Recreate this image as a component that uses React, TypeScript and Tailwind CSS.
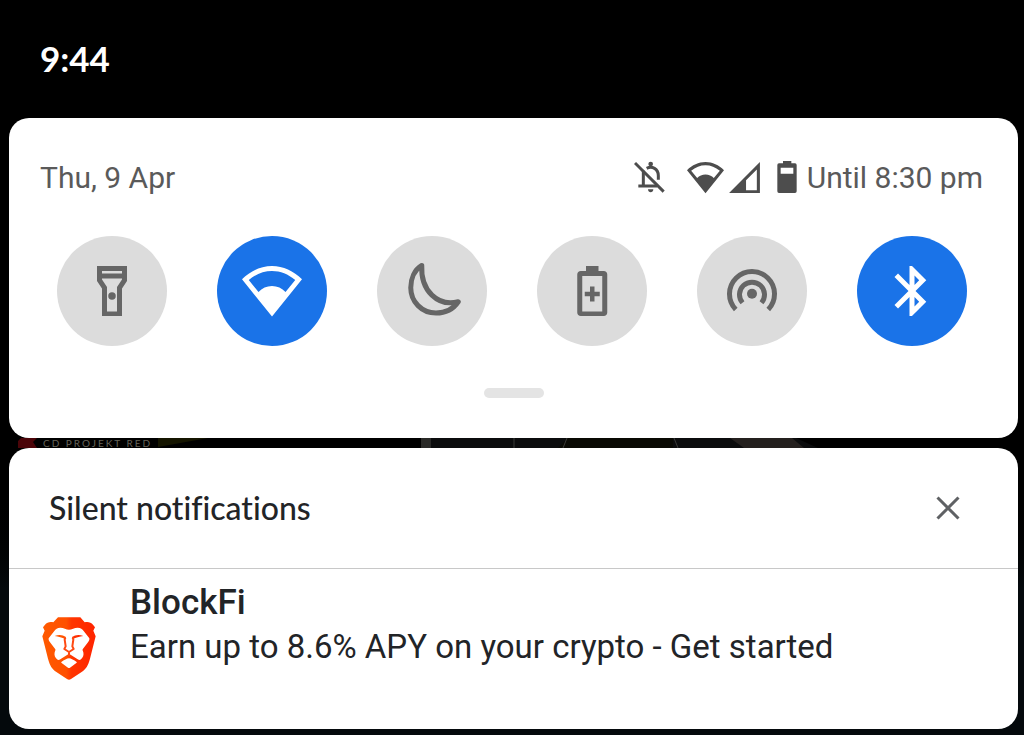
import type { ReactNode } from "react";

type Tile = {
  label: string;
  active: boolean;
  icon: ReactNode;
};

const WIFI_PATH =
  "M12 22.2 0 7.3C3.4 4 7.5 2 12 2s8.6 2 12 5.3L12 22.2zM2.7 7.6l3.9 4.8C8 10.8 9.9 10 12 10s4 .8 5.4 2.4l3.9-4.8C18.5 5.3 15.4 4 12 4S5.5 5.3 2.7 7.6z";

const TILES: Tile[] = [
  {
    label: "Torch",
    active: false,
    icon: (
      <>
        <path
          fillRule="evenodd"
          d="M6 2h12v6l-2 3v11H8V11L6 8V2zm2 2v1h8V4H8zm0 3v.4l2 3V20.2h4V10.4l2-3V7H8z"
        />
        <circle cx="12" cy="14" r="1.5" />
      </>
    ),
  },
  { label: "Wi-Fi", active: true, icon: <path fillRule="evenodd" d={WIFI_PATH} /> },
  {
    label: "Do not disturb",
    active: false,
    icon: (
      <path
        fill="none"
        stroke="currentColor"
        strokeWidth="2"
        strokeLinejoin="round"
        d="M7.9 1.8C5 3.5 3.5 7 3.5 10.7c0 5.6 4.4 10.1 10.1 10.1 3.8 0 7-1.7 8.9-4.5C14.4 18.4 7.4 12 7.9 1.8z"
      />
    ),
  },
  {
    label: "Battery saver",
    active: false,
    icon: (
      <>
        <path
          fillRule="evenodd"
          d="M9.6 2h5v2h2.1c.8 0 1.4.6 1.4 1.4v15.2c0 .8-.6 1.4-1.4 1.4H7.5c-.8 0-1.4-.6-1.4-1.4V5.4C6.1 4.6 6.7 4 7.5 4h2.1V2zM8.1 6v14.2h8V6h-8z"
        />
        <path d="M11.2 10.2H13v2.1h2.1v1.8H13v2.1h-1.8v-2.1H9.1v-1.8h2.1z" />
      </>
    ),
  },
  {
    label: "Hotspot",
    active: false,
    icon: (
      <>
        <circle cx="12" cy="13.1" r="2" />
        <g fill="none" stroke="currentColor" strokeWidth="2">
          <path d="M8.2 16.7a5 5 0 1 1 7.6 0" />
          <path d="M5.5 19.4a9 9 0 1 1 13 0" />
        </g>
      </>
    ),
  },
  {
    label: "Bluetooth",
    active: true,
    icon: (
      <path d="M17.71 7.71 12 2h-1v7.59L6.41 5 5 6.41 10.59 12 5 17.59 6.41 19 11 14.41V22h1l5.71-5.71-4.3-4.29 4.3-4.29zM13 5.83l1.88 1.88L13 9.59V5.83zm1.88 10.46L13 18.17v-3.76l1.88 1.88z" />
    ),
  },
];

export default function App() {
  return (
    <main className="min-h-screen bg-linear-to-b from-black from-65% to-[#04090c] to-80% pl-[9px] pr-1.5 pb-1.5 font-['Roboto',sans-serif]">
      <header className="flex h-[118px] items-center pb-0.5 pl-[31px]">
        <time className="font-['Lato',sans-serif] text-[35px] leading-10 font-bold text-white">9:44</time>
      </header>
      <QuickSettings />
      <BackdropStrip />
      <SilentNotifications />
    </main>
  );
}

function QuickSettings() {
  return (
    <section className="rounded-[20px] bg-white pt-[35px] pb-10">
      <div className="flex h-12 items-center justify-between pr-[35px] pl-[31px] text-[30px] text-[#5a5a5a]">
        <span>Thu, 9 Apr</span>
        <StatusIcons />
      </div>
      <div className="mt-[35px] flex justify-between pr-[51px] pl-12">
        {TILES.map((tile) => (
          <button
            key={tile.label}
            type="button"
            aria-label={tile.label}
            aria-pressed={tile.active}
            className={`flex size-[110px] items-center justify-center rounded-full ${
              tile.active ? "bg-[#1a73e8] text-white" : "bg-[#dcdcdc] text-[#666]"
            }`}
          >
            <svg viewBox="0 0 24 24" className="size-[60px]" fill="currentColor">
              {tile.icon}
            </svg>
          </button>
        ))}
      </div>
      <div className="mx-auto mt-[42px] h-2.5 w-[60px] rounded-full bg-[#e4e4e4]" />
    </section>
  );
}

function StatusIcons() {
  return (
    <div className="flex items-center text-[#4d4d4d]">
      {/* bell, crossed out */}
      <svg viewBox="0 0 93 96" className="mr-[22px] h-8 w-[31px]" fill="none" stroke="currentColor">
        <path strokeWidth="9" d="M3 6l86 86" />
        <path strokeWidth="9" d="M28 29v43M13 75h56M38 22c16-8 35 1 35 22v12" />
        <circle cx="50" cy="9" r="7" fill="currentColor" stroke="none" />
        <path d="M42 85h16c0 12-16 12-16 0z" fill="currentColor" stroke="none" />
      </svg>
      <svg viewBox="0 0 24 24" className="mr-0.5 size-[37px]" fill="currentColor">
        <path fillRule="evenodd" d={WIFI_PATH} />
      </svg>
      <svg viewBox="0 0 24 24" className="mr-3.5 size-[37px]" fill="currentColor">
        <path fillRule="evenodd" d="M2 22h20V2L2 22zm18-1.8h-7v-6.4l7-7v13.4z" />
      </svg>
      <svg viewBox="0 0 60 96" className="mr-2.5 h-8 w-5" fill="currentColor">
        <path
          fillRule="evenodd"
          d="M18 0h25v7h11q5 0 5 5v79q0 5-5 5H6q-5 0-5-5V12q0-5 5-5h12V0zM11 20v18h38V20H11z"
        />
      </svg>
      <span className="text-[#5a5a5a]">Until 8:30 pm</span>
    </div>
  );
}

/** Sliver of the dimmed video that shows between the two cards. */
function BackdropStrip() {
  return (
    <div className="flex h-2.5 items-center justify-between">
      <div className="flex items-center">
        <svg viewBox="0 0 34 10" className="h-2.5 w-[34px] shrink-0">
          <path d="M9 10V3l3-3h16l-4 4 4 6z" fill="#4b0509" />
        </svg>
        <span className="font-['Lato',sans-serif] text-[10px] leading-[10px] tracking-[2px] whitespace-nowrap text-[#66645a]">
          CD PROJEKT RED
        </span>
      </div>
      <svg viewBox="0 0 860 10" className="h-2.5 w-[860px] min-w-0" preserveAspectRatio="none">
        <path d="M0 0h50L0 9z" fill="#151500" />
        <path d="M263 0h375l22 10H263z" fill="#0b0c0d" />
        <path d="M263 0h10v10h-10z" fill="#292927" />
        <path d="M410 0h105v10H400z" fill="#090903" />
        <path d="M356 0v10M409 0l-4 10M516 0l4 10" stroke="#3a3a38" strokeWidth="1" />
        <path d="M572 0h62l12 10h-60z" fill="#24201e" />
      </svg>
    </div>
  );
}

function SilentNotifications() {
  return (
    <section className="overflow-hidden rounded-[20px] bg-white">
      <div className="flex h-[120px] items-center justify-between pr-[52px] pl-10">
        <h2 className="font-['Lato',sans-serif] text-[32px] leading-10 font-medium text-[#222427] [font-variant-ligatures:none]">
          Silent notifications
        </h2>
        <button type="button" aria-label="Clear silent notifications" className="p-1.5 text-[#5f6164]">
          <svg viewBox="0 0 24 24" className="size-6" fill="none" stroke="currentColor" strokeWidth="3">
            <path d="M1.5 1.5l21 21M22.5 1.5l-21 21" />
          </svg>
        </button>
      </div>
      <article className="flex h-[161px] items-center border-t border-[#c8c8c8] pl-[33px]">
        <BraveLogo />
        <div className="ml-[34px] self-start pt-3 text-[#222427]">
          <h3 className="text-[35px] leading-[44px] font-medium">BlockFi</h3>
          <p className="text-[33px] leading-[44px]">Earn up to 8.6% APY on your crypto - Get started</p>
        </div>
      </article>
    </section>
  );
}

function BraveLogo() {
  return (
    <svg viewBox="18 20 162 192" className="h-16 w-[54px] shrink-0">
      <defs>
        <linearGradient id="mane" x1="0" x2="1">
          <stop offset="0" stopColor="#ff5a00" />
          <stop offset=".45" stopColor="#ff5000" />
          <stop offset=".55" stopColor="#ff3500" />
          <stop offset="1" stopColor="#ff2400" />
        </linearGradient>
      </defs>
      <path
        fill="url(#mane)"
        d="M66 21h67l13 15c10-3 19 0 25 7l6 8-5 10 7 17-17 67c-6 22-12 30-24 39l-33 22q-6 5-12 0l-33-22c-12-9-18-17-24-39L19 78l7-17-5-10 6-8c6-7 15-10 25-7z"
      />
      {/* face */}
      <path
        fill="#fff"
        d="M99 58c8 0 16-6 26-6 9 0 14 5 18 10l17 22c1 4-1 8-4 12l-16 21c-1 3 1 6 2 9 2 9-1 16-7 21-3 3-6 3-10 0l-26-17-26 17c-4 3-7 3-10 0-6-5-9-12-7-21 1-3 3-6 2-9L42 96c-3-4-5-8-4-12l17-22c4-5 9-10 18-10 10 0 18 6 26 6z"
      />
      <path fill="#fff" d="M99 144c5 0 16 6 22 10 2 2 2 3 0 4l-19 14q-3 2-6 0l-19-14c-2-1-2-2 0-4 6-4 17-10 22-10z" />
      {/* brows */}
      <path fill="url(#mane)" d="M56 77c12-5 24-4 34 3l-2 7c-10-6-20-8-32-10zM142 77c-12-5-24-4-34 3l2 7c10-6 20-8 32-10z" />
      {/* nose and mouth */}
      <path
        fill="none"
        stroke="#ff4a12"
        strokeWidth="6"
        strokeLinejoin="round"
        d="M88 82l-2 6 3 20-4 8 14 9 14-9-4-8 3-20-2-6M99 125v12"
      />
    </svg>
  );
}
